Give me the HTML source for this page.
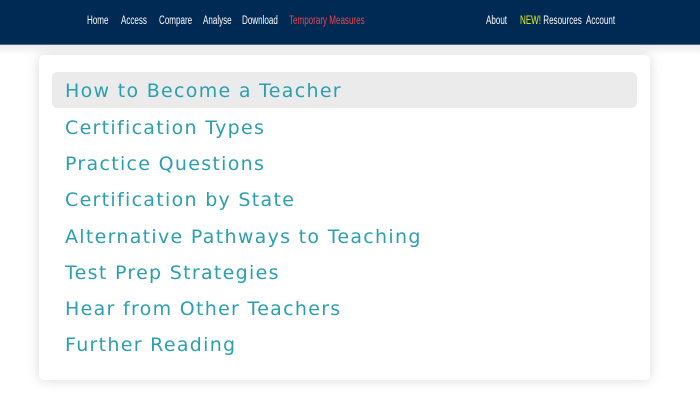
<!DOCTYPE html>
<html><head><style>
body{margin:0;width:700px;height:400px;background:#fff;overflow:hidden;font-family:"Liberation Sans",sans-serif}
.nav{position:absolute;left:0;top:0;width:700px;height:44px;background:#002a54;border-bottom:1px solid #4a6a8a}
.nav>span{position:absolute;top:15px;font-size:11.5px;color:#fff;white-space:nowrap;transform:scaleX(0.7);transform-origin:left top}
.shade{position:absolute;top:45px;left:0;width:700px;height:10px;background:linear-gradient(#ececec,#fff)}
.card{position:absolute;left:39px;top:55px;width:611px;height:325px;background:#fff;border-radius:5px;box-shadow:0 0 12px rgba(0,0,0,0.15)}
.item{position:absolute;left:13px;width:585px;height:36px;line-height:38px;font-family:"DejaVu Sans",sans-serif;font-size:19px;letter-spacing:1.3px;color:#2b9fb0;padding-left:13px;box-sizing:border-box;border-radius:5px;white-space:nowrap}
.hl{background:#ebebeb}
</style></head><body>
<div class="nav">
<span style="left:87px">Home</span>
<span style="left:121px">Access</span>
<span style="left:159px">Compare</span>
<span style="left:203px">Analyse</span>
<span style="left:242px">Download</span>
<span style="left:289px;color:#e8444d">Temporary Measures</span>
<span style="left:486px">About</span>
<span style="left:520px"><span style="color:#e4ef2a">NEW!</span> Resources</span>
<span style="left:586px">Account</span>
</div>
<div class="shade"></div>
<div class="card">
<div class="item hl" style="top:17px">How to Become a Teacher</div>
<div class="item" style="top:54px">Certification Types</div>
<div class="item" style="top:90px">Practice Questions</div>
<div class="item" style="top:126px">Certification by State</div>
<div class="item" style="top:163px">Alternative Pathways to Teaching</div>
<div class="item" style="top:199px">Test Prep Strategies</div>
<div class="item" style="top:235px">Hear from Other Teachers</div>
<div class="item" style="top:271px">Further Reading</div>
</div>
</body></html>
